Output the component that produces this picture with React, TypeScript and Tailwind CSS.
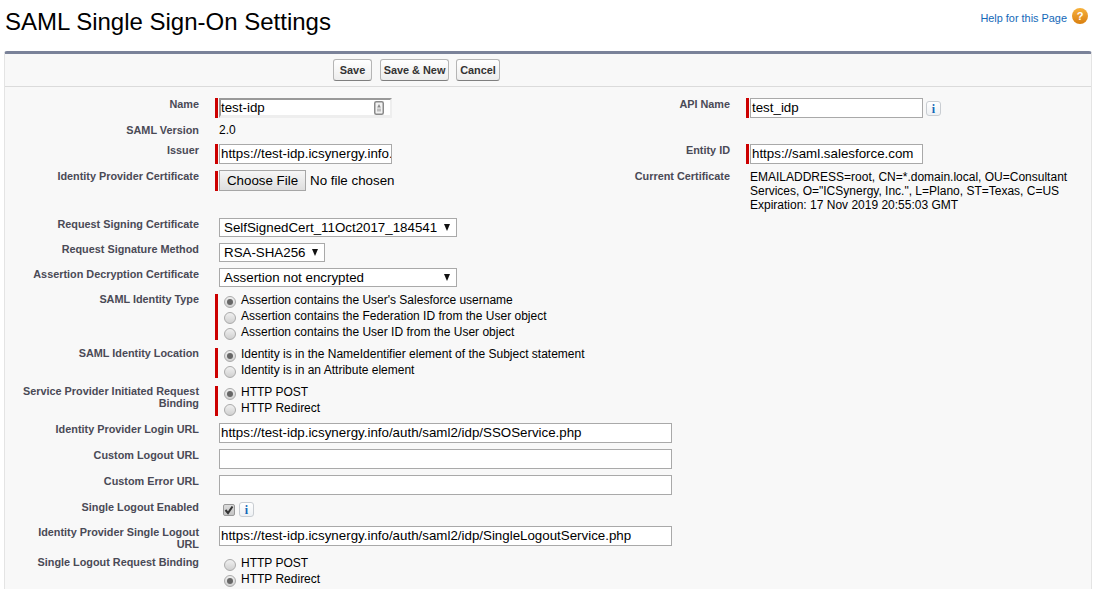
const F = "font-['Liberation_Sans',Arial,sans-serif]";

function Bar() {
  return <span className="w-[3px] shrink-0 self-stretch bg-[#c00]" />;
}

function Label({ children, w = "w-[194px]" }: { children: React.ReactNode; w?: string }) {
  return (
    <div className={`${w} shrink-0 pl-[14px] text-right text-[10.85px] font-bold leading-[12px] text-[#4a4a56]`}>{children}</div>
  );
}

function TextBox({ value = "", w }: { value?: string; w: string }) {
  return (
    <div className={`${w} h-[20px] overflow-hidden whitespace-nowrap border border-[#a9a9a9] bg-white pl-[1px] text-[13.33px] leading-[18px] text-black`}>
      {value}
    </div>
  );
}

function Select({ value, w }: { value: string; w: string }) {
  return (
    <div className={`${w} flex h-[19px] items-center justify-between border border-[#a9a9a9] bg-white pl-[4px] pr-[6px] text-[13.33px] leading-[17px] text-black`}>
      <span>{value}</span>
      <span className="mb-[1px] h-0 w-0 border-x-[3.5px] border-t-[7px] border-x-transparent border-t-[#111]" />
    </div>
  );
}

function Radio({ checked, label }: { checked?: boolean; label: string }) {
  return (
    <div className="flex h-[16px] items-center text-[12px] text-black">
      <span className="mx-[5px] flex h-[12px] w-[12px] shrink-0 items-center justify-center rounded-full border border-[#aaa] bg-gradient-to-b from-[#f0f0f0] to-[#d0d0d0]">
        {checked && <span className="h-[6px] w-[6px] rounded-full bg-[#666]" />}
      </span>
      <span className="mb-[4px] whitespace-nowrap">{label}</span>
    </div>
  );
}

function Info({ className = "" }: { className?: string }) {
  return (
    <span className={`flex h-[15px] w-[15px] items-center justify-center rounded-[3px] border border-[#c9cdd2] bg-gradient-to-b from-[#fff] to-[#eef1f4] font-['Liberation_Serif',serif] text-[12px] font-bold leading-none text-[#1468b8] ${className}`}>
      i
    </span>
  );
}

function Btn({ children, w }: { children: React.ReactNode; w: string }) {
  return (
    <span className={`flex h-[22px] items-center justify-center rounded-[3px] border border-[#b5b5b5] border-b-[#7f7f7f] bg-gradient-to-b from-[#fff] to-[#ededed] ${w} text-[10.9px] font-bold text-[#333]`}>
      {children}
    </span>
  );
}

function Row({ h, label, children, right }: { h: string; label: React.ReactNode; children?: React.ReactNode; right?: React.ReactNode }) {
  return (
    <div className={`flex ${h}`}>
      <Label>{label}</Label>
      <div className="ml-[16px] w-[321px] shrink-0">{children}</div>
      {right}
    </div>
  );
}

function Right({ label, children }: { label: string; children: React.ReactNode }) {
  return (
    <>
      <Label>{label}</Label>
      <div className="ml-[16px] min-w-0 flex-1">{children}</div>
    </>
  );
}

function Required({ children, w = "" }: { children: React.ReactNode; w?: string }) {
  return (
    <div className={`flex ${w}`}>
      <Bar />
      <div className="ml-[1px]">{children}</div>
    </div>
  );
}

export default function App() {
  return (
    <div className={`${F} h-[589px] w-[1096px] overflow-hidden bg-white`}>
      <header className="flex h-[51px] items-start justify-between pl-[5px] pr-[8px]">
        <h1 className="mt-[7px] text-[24px] leading-[30px] text-black">SAML Single Sign-On Settings</h1>
        <div className="mt-[8px] flex items-start">
          <span className="mt-[3px] text-[10.9px] leading-[14px] text-[#1468b8]">Help for this Page</span>
          <span className="ml-[5px] flex h-[16px] w-[16px] items-center justify-center rounded-full bg-gradient-to-b from-[#f7b23c] to-[#d97f0c] text-[11px] font-bold leading-none text-white">?</span>
        </div>
      </header>

      <main className="mx-[4px] h-[538px] rounded-t-[3px] border-x border-t-[3px] border-x-[#e4e4e4] border-t-[#7a8299] bg-[#f8f8f8]">
        <div className="flex h-[33px] items-center justify-start border-b border-[#dbdbdb] pl-[328px]">
          <Btn w="w-[39px]">Save</Btn>
          <div className="w-[8px]" />
          <Btn w="w-[69px]">Save &amp; New</Btn>
          <div className="w-[7px]" />
          <Btn w="w-[44px]">Cancel</Btn>
        </div>

        <div className="pt-[11px]">
          <Row
            h="h-[25px]"
            label="Name"
            right={
              <Right label="API Name">
                <div className="flex items-start">
                  <Required><TextBox value="test_idp" w="w-[173px]" /></Required>
                  <Info className="ml-[3px] mt-[3px]" />
                </div>
              </Right>
            }
          >
            <Required>
              <div className="relative h-[20px] w-[173px] border-x-[2px] border-b-[3px] border-t-[2px] border-b-[#eeeeee] border-l-[#999] border-r-[#eeeeee] border-t-[#999] bg-white text-[13.33px] leading-[16px] text-black">
                test-idp
                <svg className="absolute right-[6px] top-[1px]" width="10" height="14" viewBox="0 0 10 14">
                  <rect x="0.75" y="0.75" width="8.5" height="12.5" rx="1.5" fill="#f2f2f2" stroke="#8a8a8a" strokeWidth="1.5" />
                  <path d="M5 3 6.8 6.5H3.2Z" fill="#8a8a8a" />
                  <rect x="3" y="7.5" width="4" height="3" fill="#bdbdbd" />
                </svg>
              </div>
            </Required>
          </Row>
          <Row h="h-[21px]" label={<span className="relative top-[1px]">SAML Version</span>}>
            <div className="pl-[4px] text-[12px] leading-[14px] text-black">2.0</div>
          </Row>
          <Row
            h="h-[26px]"
            label="Issuer"
            right={
              <Right label="Entity ID">
                <Required><TextBox value="https://saml.salesforce.com" w="w-[173px]" /></Required>
              </Right>
            }
          >
            <Required><TextBox value="https://test-idp.icsynergy.info." w="w-[173px]" /></Required>
          </Row>
          <Row
            h="h-[48px]"
            label="Identity Provider Certificate"
            right={
              <Right label="Current Certificate">
                <div className="pl-[4px] text-[12px] leading-[14px] text-black">
                  EMAILADDRESS=root, CN=*.domain.local, OU=Consultant
                  <br />
                  Services, O="ICSynergy, Inc.", L=Plano, ST=Texas, C=US
                  <br />
                  Expiration: 17 Nov 2019 20:55:03 GMT
                </div>
              </Right>
            }
          >
            <div className="flex items-center">
              <div className="flex h-[20px]">
                <Bar />
              </div>
              <span className="ml-[1px] flex h-[21px] w-[87px] items-center justify-center border border-[#a6a6a6] bg-gradient-to-b from-[#f6f6f6] to-[#dedede] text-[13.33px] text-black">Choose File</span>
              <span className="ml-[4px] whitespace-nowrap text-[13.33px] text-black">No file chosen</span>
            </div>
          </Row>
          <Row h="h-[25px]" label="Request Signing Certificate">
            <div className="ml-[4px]"><Select value="SelfSignedCert_11Oct2017_184541" w="w-[238px]" /></div>
          </Row>
          <Row h="h-[25px]" label="Request Signature Method">
            <div className="ml-[4px]"><Select value="RSA-SHA256" w="w-[106px]" /></div>
          </Row>
          <Row h="h-[25px]" label="Assertion Decryption Certificate">
            <div className="ml-[4px]"><Select value="Assertion not encrypted" w="w-[238px]" /></div>
          </Row>
          <Row h="h-[54px]" label="SAML Identity Type">
            <Required w="mt-[1px] h-[46px]">
              <Radio checked label="Assertion contains the User's Salesforce username" />
              <Radio label="Assertion contains the Federation ID from the User object" />
              <Radio label="Assertion contains the User ID from the User object" />
            </Required>
          </Row>
          <Row h="h-[38px]" label="SAML Identity Location">
            <Required w="mt-[1px] h-[30px]">
              <Radio checked label="Identity is in the NameIdentifier element of the Subject statement" />
              <Radio label="Identity is in an Attribute element" />
            </Required>
          </Row>
          <Row h="h-[38px]" label="Service Provider Initiated Request Binding">
            <Required w="mt-[1px] h-[30px]">
              <Radio checked label="HTTP POST" />
              <Radio label="HTTP Redirect" />
            </Required>
          </Row>
          <Row h="h-[26px]" label="Identity Provider Login URL">
            <div className="ml-[4px]"><TextBox value="https://test-idp.icsynergy.info/auth/saml2/idp/SSOService.php" w="w-[453px]" /></div>
          </Row>
          <Row h="h-[26px]" label="Custom Logout URL">
            <div className="ml-[4px]"><TextBox w="w-[453px]" /></div>
          </Row>
          <Row h="h-[26px]" label="Custom Error URL">
            <div className="ml-[4px]"><TextBox w="w-[453px]" /></div>
          </Row>
          <Row h="h-[25px]" label="Single Logout Enabled">
            <div className="ml-[8px] flex items-center gap-[4px] pt-[1px]">
              <span className="flex h-[12px] w-[12px] items-center justify-center rounded-[2px] border border-[#999] bg-gradient-to-b from-[#dcdcdc] to-[#c4c4c4]">
                <svg width="10" height="10" viewBox="0 0 10 10"><path d="M1.5 5 4 8 8.5 1.5" fill="none" stroke="#333" strokeWidth="2" /></svg>
              </span>
              <Info />
            </div>
          </Row>
          <Row h="h-[30px]" label="Identity Provider Single Logout URL">
            <div className="ml-[4px]"><TextBox value="https://test-idp.icsynergy.info/auth/saml2/idp/SingleLogoutService.php" w="w-[453px]" /></div>
          </Row>
          <Row h="h-[32px]" label="Single Logout Request Binding">
            <div className="ml-[4px] pt-[1px]">
              <Radio label="HTTP POST" />
              <Radio checked label="HTTP Redirect" />
            </div>
          </Row>
        </div>
      </main>
    </div>
  );
}
